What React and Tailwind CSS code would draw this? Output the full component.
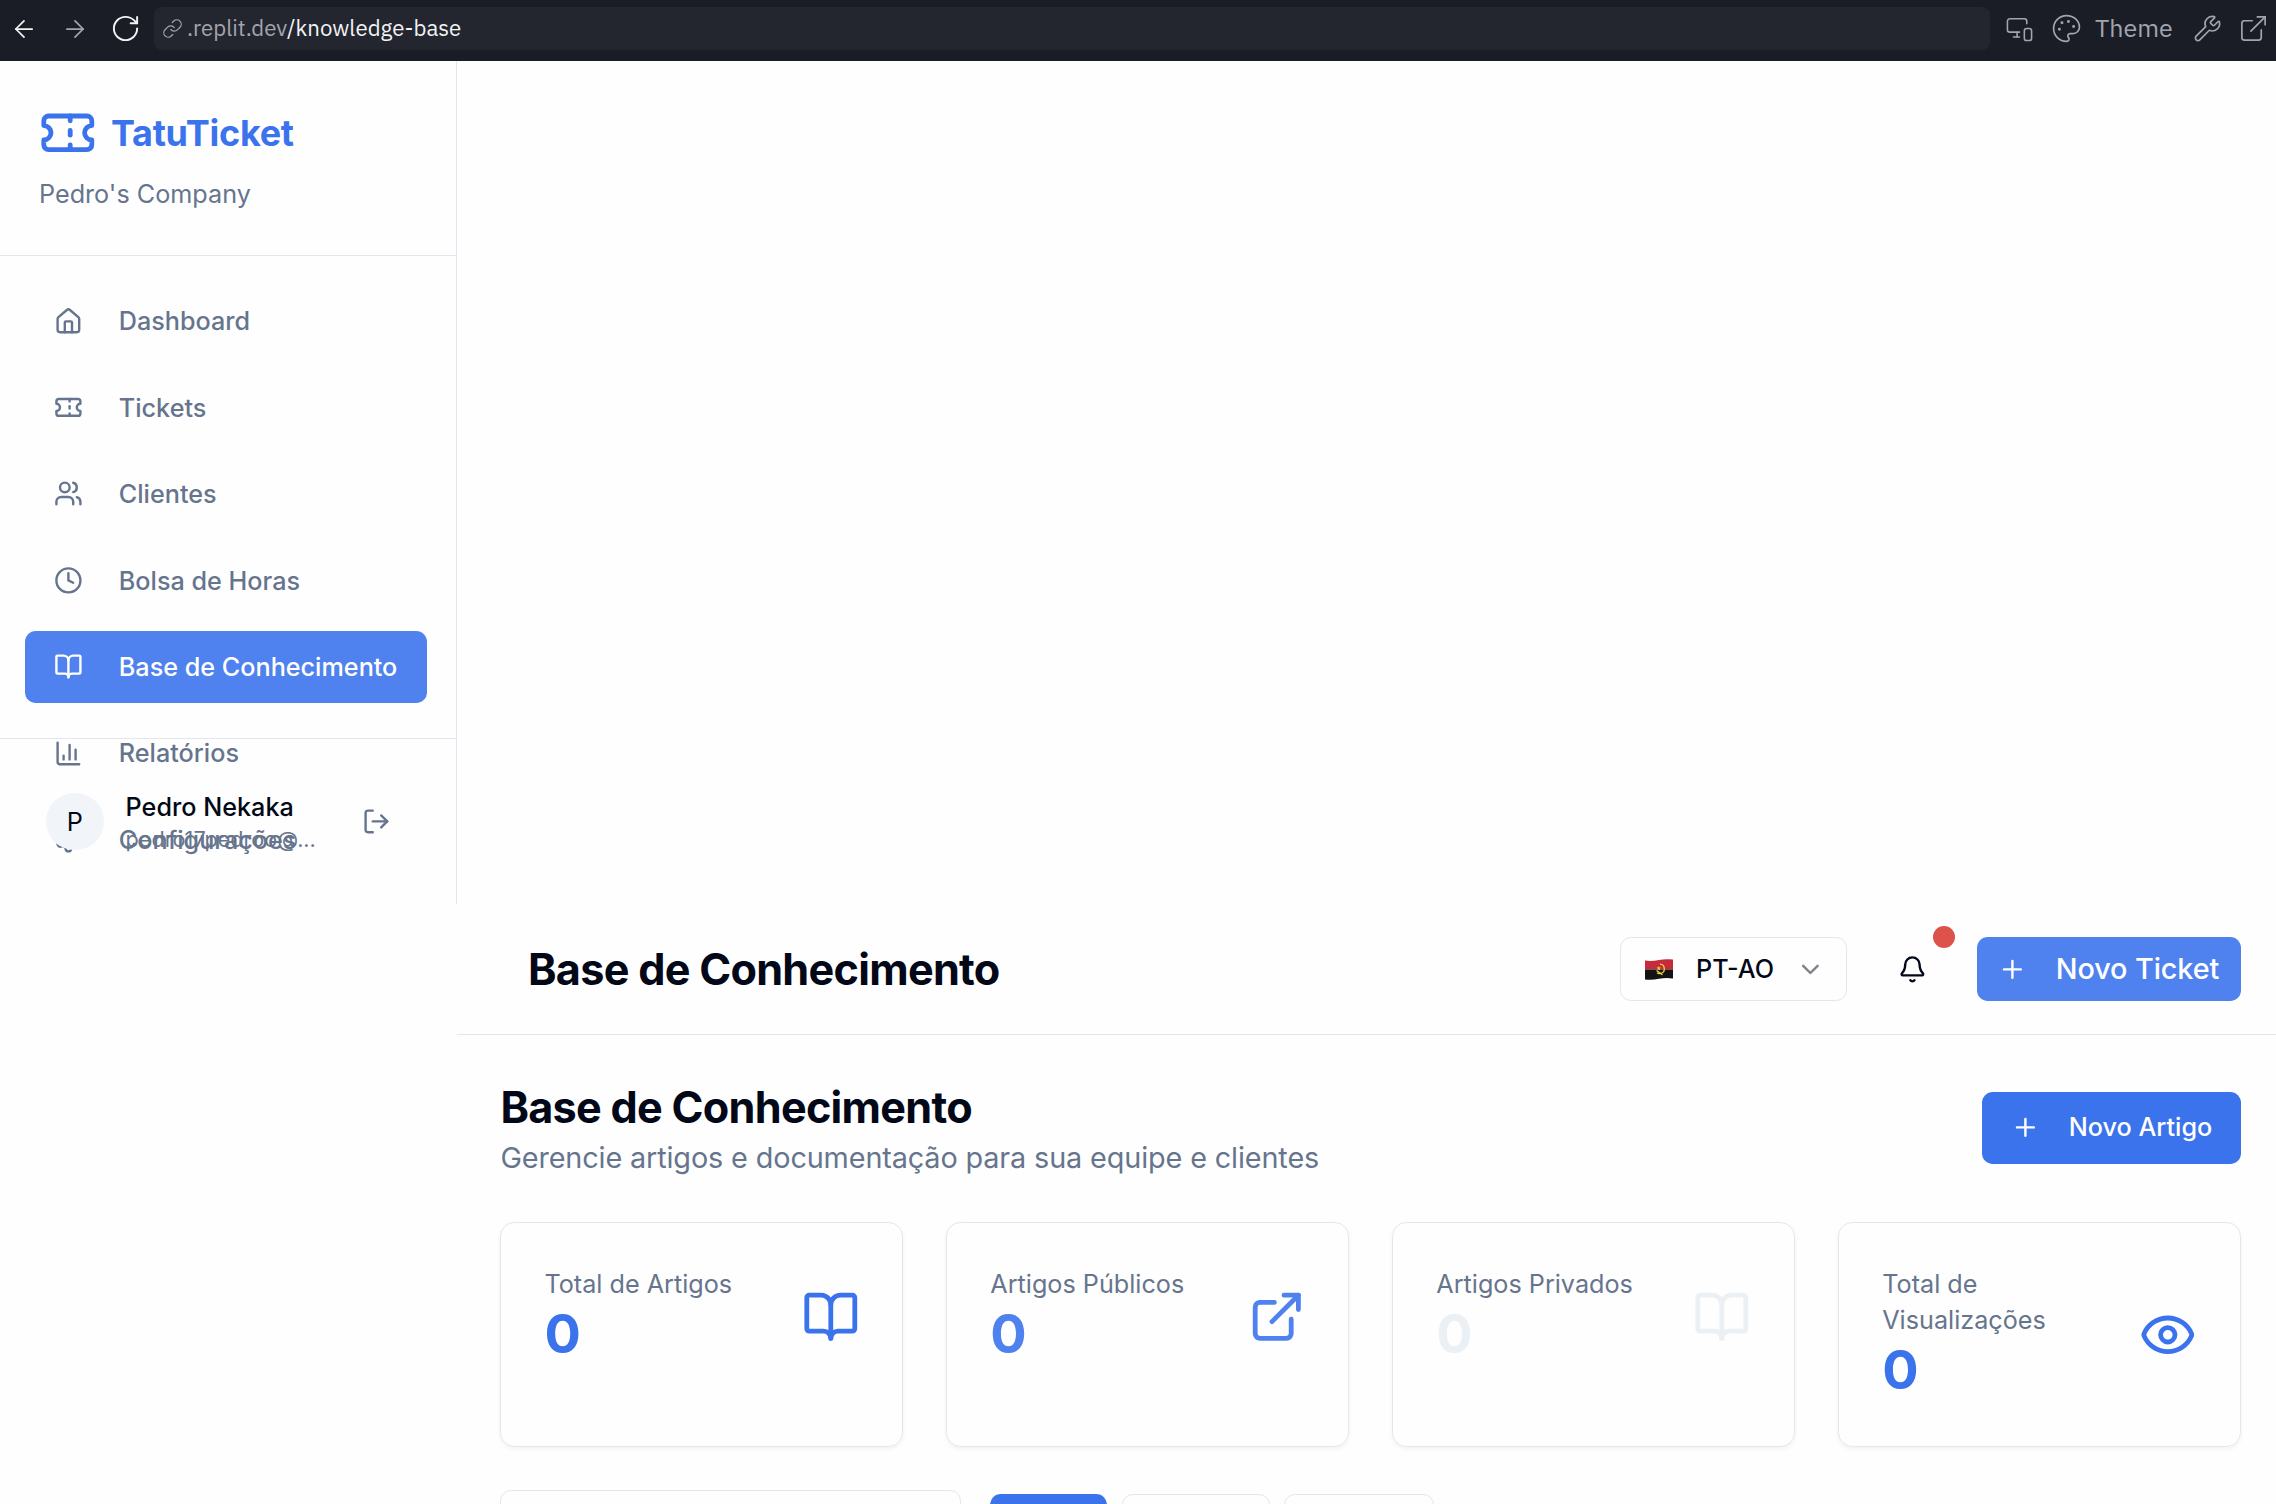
import React from "react";
import {
  ArrowLeft, ArrowRight, RotateCw, Link, MonitorSmartphone, Palette, Wrench, ExternalLink,
  Ticket, House, Users, Clock, BookOpen, Settings, LogOut, ChevronDown, Bell, Plus, Eye,
} from "lucide-react";

function BarChart(props) {
  return (
    <svg viewBox="0 0 24 24" fill="none" stroke="currentColor" strokeWidth="2" strokeLinecap="round" strokeLinejoin="round" {...props}>
      <path d="M3 3v16a2 2 0 0 0 2 2h16" />
      <path d="M18 17V9" />
      <path d="M13 17V5" />
      <path d="M8 17v-3" />
    </svg>
  );
}

function AngolaFlag(props) {
  return (
    <svg viewBox="0 0 28 21" fill="none" {...props}>
      <path d="M0 1.6C5 2.400 9 2 14 1S23 0 28 .6V10.500H0Z" fill="#c62b3c" />
      <path d="M0 10.500H28V19.500C23 18.600 19 18.800 14 19.800S5 21 0 20.500Z" fill="#131313" />
      <path d="M15 5.200a4.700 4.700 0 0 1 .5 9.300c-1.300.2-2.500 0-3.500-.7" stroke="#f0d23c" strokeWidth="1.300" />
      <path d="M11.500 11.500l6 4.300" stroke="#f0d23c" strokeWidth="1.300" />
      <path d="M13.800 7l.6 1.500 1.600.1-1.200 1 .4 1.600-1.400-.9-1.400.9.4-1.600-1.200-1 1.600-.1Z" fill="#f0d23c" />
    </svg>
  );
}

const navItems = [
  { label: "Dashboard", icon: House },
  { label: "Tickets", icon: Ticket },
  { label: "Clientes", icon: Users },
  { label: "Bolsa de Horas", icon: Clock },
  { label: "Base de Conhecimento", icon: BookOpen, active: true },
  { label: "Relatórios", icon: BarChart },
  { label: "Configurações", icon: Settings },
];

const stats = [
  { label: "Total de Artigos", icon: BookOpen, color: "text-[#3b73ed]" },
  { label: "Artigos Públicos", icon: ExternalLink, color: "text-[#4f82ee]" },
  { label: "Artigos Privados", icon: BookOpen, color: "text-[#ebf0f5]" },
  { label: "Total de Visualizações", icon: Eye, color: "text-[#3b73ed]" },
];

function BrowserBar() {
  return (
    <div className="flex h-[61px] items-center bg-[#1a1d25] pb-[4px] text-[#a3a5ad]">
      <ArrowLeft className="ml-[10px] size-[28px] text-[#f2f3f5]" strokeWidth={1.5} />
      <ArrowRight className="ml-[23px] size-[28px]" strokeWidth={1.5} />
      <RotateCw className="ml-[21px] size-[31px] text-[#f2f3f5]" strokeWidth={1.5} />
      <div className="ml-[13px] flex h-[43px] w-[1836px] items-center rounded-[8px] bg-[#23262f] pl-[8px] font-['IBM_Plex_Sans','Noto_Sans',sans-serif] text-[22.25px]">
        <Link className="size-[21px]" strokeWidth={1.4} />
        <span className="ml-[4px] whitespace-pre pb-[1px]">.replit.dev<span className="text-[#f2f3f5]">/knowledge-base</span></span>
      </div>
      <MonitorSmartphone className="ml-[15px] size-[29px]" strokeWidth={1.3} />
      <Palette className="ml-[17px] size-[31px]" strokeWidth={1.3} />
      <span className="ml-[13px] w-[81px] pb-[2px] font-['IBM_Plex_Sans','Inter',sans-serif] text-[25px]">Theme</span>
      <Wrench className="ml-[17px] size-[29px]" strokeWidth={1.4} />
      <ExternalLink className="ml-[16px] size-[31px]" strokeWidth={1.3} />
    </div>
  );
}

function Sidebar() {
  return (
    <aside className="relative h-[843px] w-[457px] border-r border-[#e2e6f0]">
      <div className="h-[195px] border-b border-[#e2e6f0] pl-[39px] pt-[43px]">
        <div className="flex items-center gap-[14.4px]">
          <Ticket className="size-[57.6px] text-[#3b73ed]" />
          <span className="text-[36px] font-bold leading-[50px] tracking-[-0.3px] text-[#3b73ed]">TatuTicket</span>
        </div>
        <p className="mt-[14px] text-[25.2px] leading-[36px] text-[#66758d]">Pedro's Company</p>
      </div>
      <nav className="flex flex-col gap-[14.4px] pl-[25px] pt-[29px]">
        {navItems.map(({ label, icon: Icon, active }) => (
          <a
            key={label}
            className={
              "flex h-[72px] w-[402px] items-center gap-[36px] rounded-[10.8px] pl-[29px] text-[25.2px] font-medium " +
              (active ? "bg-[#4f82ee] text-white" : "text-[#66758d]")
            }
          >
            <Icon className="size-[28.8px] shrink-0" />
            <span className="whitespace-nowrap pt-[2.5px]">{label}</span>
          </a>
        ))}
      </nav>
      <div className="absolute bottom-0 left-0 flex h-[166px] w-[456px] items-center border-t border-[#e2e6f0] pl-[46px]">
        <div className="flex size-[57.6px] items-center justify-center rounded-full bg-[#f1f5f9] text-[25.2px] text-[#020817]"><span className="pt-[2px]">P</span></div>
        <div className="ml-[22px] w-[200px] whitespace-nowrap">
          <p className="text-[25.2px] font-medium leading-[36px] text-[#020817]">Pedro Nekaka</p>
          <p className="text-[21.6px] leading-[29px] text-[#66758d]">pedro17pedroo@...</p>
        </div>
        <LogOut className="ml-[36px] size-[28.8px] text-[#66758d]" />
      </div>
    </aside>
  );
}

function Header() {
  return (
    <header className="flex h-[131px] items-center border-b border-[#e2e6f0] pl-[71px] pr-[35px]">
      <h1 className="pb-[1px] text-[43.2px] font-bold leading-[58px] tracking-[-0.72px] text-[#020817]">Base de Conhecimento</h1>
      <div className="ml-auto flex h-[64px] w-[227px] items-center rounded-[10.8px] border border-[#e2e6f0] pl-[24px] text-[25.2px] font-medium text-[#020817]">
        <AngolaFlag className="h-[21px] w-[28px]" />
        <span className="ml-[23px] w-[80px] pt-[2px]">PT-AO</span>
        <ChevronDown className="ml-[20px] size-[28.8px] opacity-50" />
      </div>
      <div className="relative ml-[51px] flex h-[64px] w-[57px] items-center">
        <Bell className="size-[28.8px] text-[#020817]" />
        <span className="absolute left-[35px] top-[-11px] size-[22px] rounded-full bg-[#de524c]" />
      </div>
      <button className="ml-[22px] flex h-[64px] w-[264px] items-center rounded-[10.8px] bg-[#4f82ee] pl-[21px] text-[28.8px] font-medium tracking-[-0.1px] text-white">
        <Plus className="size-[28.8px]" />
        <span className="ml-[29px] whitespace-nowrap">Novo Ticket</span>
      </button>
    </header>
  );
}

function StatCard({ label, icon: Icon, color }) {
  return (
    <div className="flex h-[225px] flex-col rounded-[14.4px] border border-[#e2e6f0] pl-[43px] pr-[43px] pt-[43px] shadow-[0_2px_4px_rgba(0,0,0,0.05)]">
      <div className="flex items-center justify-between">
        <div className="w-[200px]">
          <p className="text-[25.2px] leading-[36px] text-[#66758d]">{label}</p>
          <p className={"pb-[1px] text-[54px] font-bold leading-[64px] " + color}>0</p>
        </div>
        <Icon className={"size-[57.6px] shrink-0 " + color} />
      </div>
    </div>
  );
}

function Main() {
  return (
    <main className="pl-[43.4px] pr-[35px]">
      <div className="flex h-[187px] items-center justify-between">
        <div>
          <h2 className="text-[43.2px] font-bold leading-[56px] tracking-[-0.72px] text-[#020817]">Base de Conhecimento</h2>
          <p className="pt-[1px] text-[28.8px] leading-[43px] tracking-[-0.125px] text-[#66758d]">Gerencie artigos e documentação para sua equipe e clientes</p>
        </div>
        <button className="mb-[2px] flex h-[72px] w-[259px] items-center rounded-[10.8px] bg-[#3b73ed] pl-[29px] text-[25.2px] font-medium text-white">
          <Plus className="size-[28.8px]" />
          <span className="ml-[29px] whitespace-nowrap pt-[1px]">Novo Artigo</span>
        </button>
      </div>
      <div className="grid grid-cols-4 gap-[43.2px]">
        {stats.map((s) => <StatCard key={s.label} {...s} />)}
      </div>
      <div className="mt-[43px] flex">
        <div className="h-[72px] w-[461px] rounded-[10.8px] border border-[#e2e6f0]" />
        <div className="mt-[4px] ml-[29px] flex gap-[14.4px]">
          <div className="h-[64px] w-[117px] rounded-[10.8px] bg-[#3b73ed]" />
          <div className="h-[64px] w-[148px] rounded-[10.8px] border border-[#e2e6f0]" />
          <div className="h-[64px] w-[150px] rounded-[10.8px] border border-[#e2e6f0]" />
        </div>
      </div>
    </main>
  );
}

export default function App() {
  return (
    <div className="h-[1504px] w-[2276px] overflow-hidden bg-[#fefefe] font-['Inter',sans-serif]">
      <BrowserBar />
      <Sidebar />
      <div className="ml-[457px]">
        <Header />
        <Main />
      </div>
    </div>
  );
}
